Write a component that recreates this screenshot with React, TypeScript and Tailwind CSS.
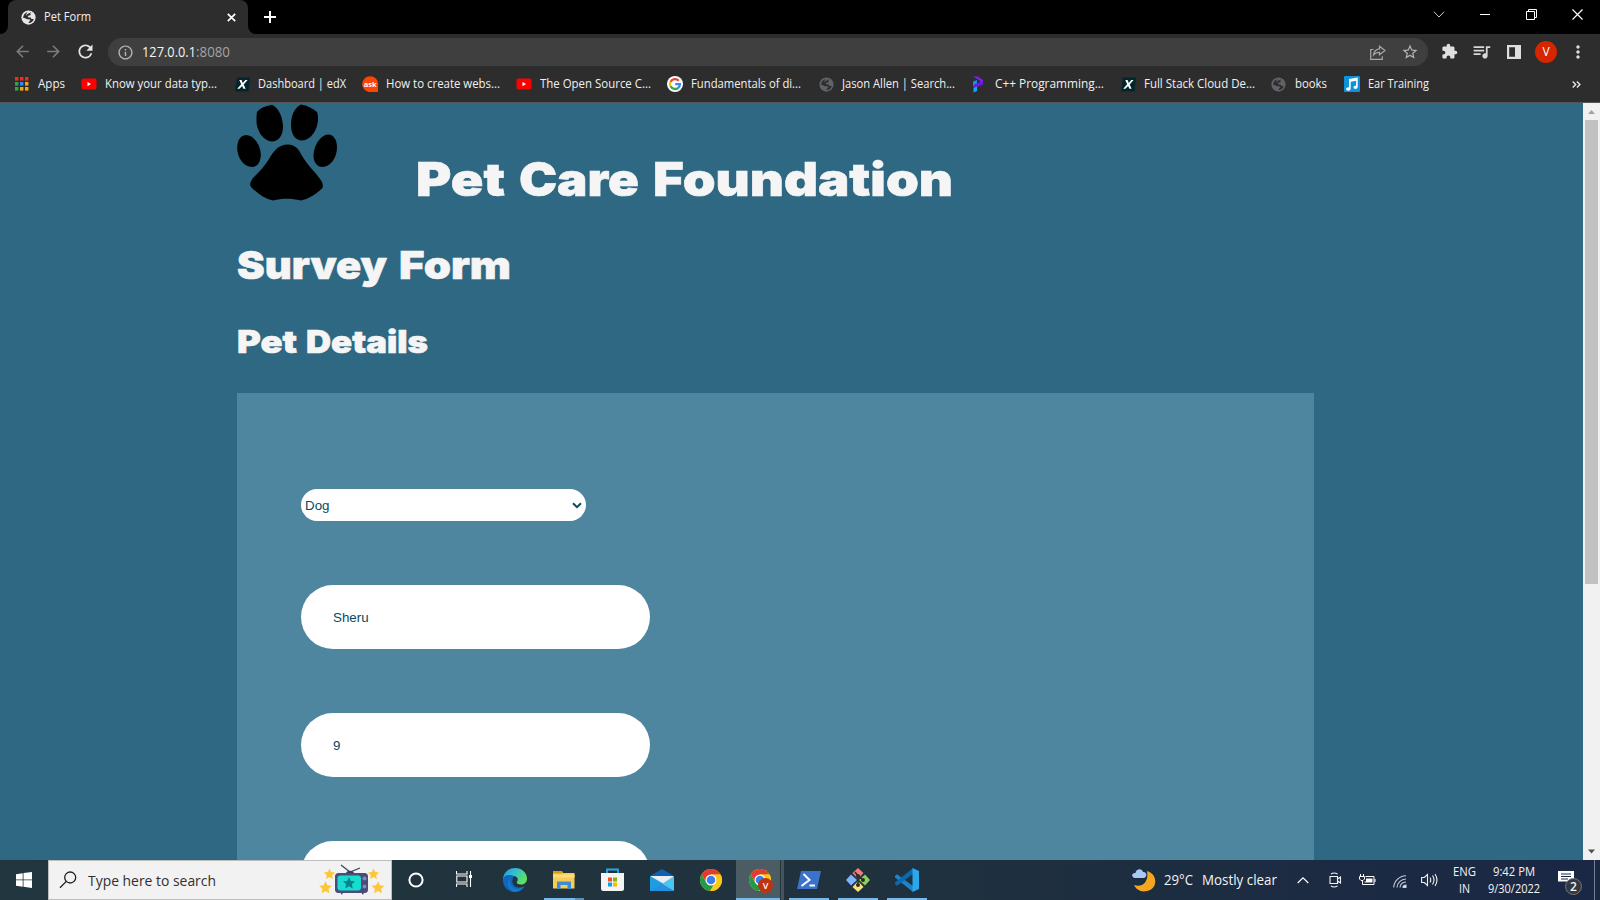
import { useLayoutEffect, useRef, type ReactNode } from 'react';
import {
  MdArrowBack,
  MdArrowForward,
  MdRefresh,
  MdInfoOutline,
  MdStarBorder,
  MdExtension,
  MdQueueMusic,
  MdMoreVert,
} from 'react-icons/md';

/* Text condensed or widened horizontally so that it fills exactly `w` pixels. */
function Fit({ w, children, className = '' }: { w: number; children: string; className?: string }) {
  const ref = useRef<HTMLSpanElement>(null);
  useLayoutEffect(() => {
    const el = ref.current;
    if (!el) return;
    el.style.transform = 'none';
    el.style.transform = `scaleX(${w / el.getBoundingClientRect().width})`;
  }, [w, children]);
  return (
    <span className={`block flex-none ${className}`} style={{ width: w }}>
      <span ref={ref} className="inline-block origin-left whitespace-pre align-top">
        {children}
      </span>
    </span>
  );
}

function Globe({ color, hole, size }: { color: string; hole: string; size: number }) {
  return (
    <svg width={size} height={size} viewBox="0 0 16 16" className="flex-none">
      <circle cx="8" cy="8" r="7.6" fill={color} />
      <path d="M10.800 2.300 9.800 4.200 10.600 5.200 7.600 6.200 7.200 7.700 10.200 8 11.200 9.700 13.600 9.500C13.200 11.800 11.200 13.800 8.200 13.900L8.400 12.400 10 11.300 9 9.800 6.500 9.900 3.800 8.500 2.300 8.600C2.300 5.500 4 3 7 2.300L5.600 4.500 5 6.200 7 4.300z" fill={hole} />
    </svg>
  );
}

function YouTube() {
  return (
    <svg width="16" height="16" viewBox="0 0 16 16">
      <rect x="0.500" y="2.500" width="15" height="11" rx="2" fill="#f00" />
      <path d="M6.500 6v4.200L10 8.100z" fill="#fff" />
    </svg>
  );
}

function Edx() {
  return (
    <svg width="15" height="15" viewBox="0 0 15 15">
      <path d="M2 0.500h13L13.500 14.500H0z" fill="#02262b" />
      <path d="M4.300 3h2.300l1.200 2.900L10.300 3h2.300L8.700 7.400l1.900 4.300H8.400L7.100 8.900l-2.600 2.800H2.200l4-4.400z" fill="#fff" />
    </svg>
  );
}

function Ask() {
  return (
    <svg width="17" height="17" viewBox="0 0 17 17">
      <circle cx="8.200" cy="8.200" r="8" fill="#fc4503" />
      <path d="M10 10h6v6H9z" fill="#fc4503" />
      <text x="8.200" y="10.600" textAnchor="middle" fontSize="7.500" fontWeight="700" fontFamily="Open Sans, sans-serif" fill="#fff">ask</text>
    </svg>
  );
}

function Google() {
  return (
    <svg width="16" height="16" viewBox="0 0 16 16">
      <circle cx="8" cy="8" r="8" fill="#fff" />
      <g fill="none" strokeWidth="2.300">
        <path d="M11.700 4.700A5 5 0 0 0 3.600 5.700" stroke="#ea4335" />
        <path d="M3.600 5.600a5 5 0 0 0 0 4.800" stroke="#fbbc05" />
        <path d="M3.600 10.300a5 5 0 0 0 7.700 1.500" stroke="#34a853" />
        <path d="M8.200 8.200h4.700a5 5 0 0 1-1.700 3.700" stroke="#4285f4" />
      </g>
    </svg>
  );
}

function Ribbon() {
  return (
    <svg width="12" height="17" viewBox="0 0 12 17">
      <path d="M1 .5h4.500L11 4v3L8.500 7.500V5z" fill="#8a1cf5" />
      <path d="M1 5.500 5 4v5l-4 2z" fill="#1a8cf0" />
      <path d="M11 5v3.500L1.500 12.500V9L8 6z" fill="#6a18e6" />
      <path d="M1.500 12 5 10.500V15l-3.500 1.500z" fill="#14a5f5" />
    </svg>
  );
}

function Music() {
  return (
    <svg width="16" height="16" viewBox="0 0 16 16">
      <rect width="16" height="16" rx="1" fill="#0c93dc" />
      <path d="M5 3 13.700 1.500v9.200c0 2.900-4.200 2.900-4.200.6 0-1.300 1.300-1.800 2.600-1.600V4.800L6.700 5.800v6.700c0 2.900-4.600 2.900-4.600.6C2.100 11.700 3.700 11 5 11.300z" fill="#fff" />
    </svg>
  );
}

function AppsGrid() {
  const colors = ['#f22c1f', '#f22c1f', '#f22c1f', '#2aa84f', '#2a8cf2', '#f5a70a', '#2aa84f', '#f5a70a', '#f5a70a'];
  return (
    <svg width="14" height="14" viewBox="0 0 14 14">
      {colors.map((c, i) => (
        <rect key={i} x={(i % 3) * 5} y={Math.floor(i / 3) * 5} width="3.400" height="3.600" fill={c} />
      ))}
    </svg>
  );
}

const bookmarks: { width: string; pad: string; icon: ReactNode; label: string; w: number }[] = [
  { width: 'w-[66px]', pad: 'w-[23px]', icon: <AppsGrid />, label: 'Apps', w: 27 },
  { width: 'w-[154px]', pad: 'w-[24px]', icon: <YouTube />, label: 'Know your data typ...', w: 112 },
  { width: 'w-[127px]', pad: 'w-[23px]', icon: <Edx />, label: 'Dashboard | edX', w: 88 },
  { width: 'w-[154px]', pad: 'w-[24px]', icon: <Ask />, label: 'How to create webs...', w: 114 },
  { width: 'w-[151px]', pad: 'w-[24px]', icon: <YouTube />, label: 'The Open Source C...', w: 111 },
  { width: 'w-[152px]', pad: 'w-[24px]', icon: <Google />, label: 'Fundamentals of di...', w: 110 },
  { width: 'w-[153px]', pad: 'w-[23px]', icon: <Globe size={15} color="#5f6368" hole="#2d2d2d" />, label: 'Jason Allen | Search...', w: 113 },
  { width: 'w-[149px]', pad: 'w-[23px]', icon: <Ribbon />, label: 'C++ Programming...', w: 109 },
  { width: 'w-[150px]', pad: 'w-[23px]', icon: <Edx />, label: 'Full Stack Cloud De...', w: 111 },
  { width: 'w-[73px]', pad: 'w-[24px]', icon: <Globe size={15} color="#5f6368" hole="#2d2d2d" />, label: 'books', w: 32 },
  { width: 'w-[90px]', pad: 'w-[24px]', icon: <Music />, label: 'Ear Training', w: 61 },
];

function TabStrip() {
  return (
    <div className="flex h-[34px] flex-none items-start bg-black">
      <svg width="8" height="34" viewBox="0 0 8 34" className="flex-none">
        <path d="M8 26v8H0a8 8 0 0 0 8-8z" fill="#2d2d2d" />
      </svg>
      <div className="flex h-[34px] w-60 flex-none items-center rounded-t-lg bg-[#2d2d2d] pl-[13px]">
        <Globe size={15} color="#e6e6e6" hole="#2d2d2d" />
        <Fit w={47} className="ml-2 text-xs leading-[34px] text-[#f1f1f1]">Pet Form</Fit>
        <svg width="9" height="9" viewBox="0 0 9 9" className="ml-[136px]">
          <path d="M.8.800 8.200 8.200M8.200.800.800 8.200" stroke="#fff" strokeWidth="1.700" />
        </svg>
      </div>
      <svg width="8" height="34" viewBox="0 0 8 34" className="flex-none">
        <path d="M0 26v8h8a8 8 0 0 1-8-8z" fill="#2d2d2d" />
      </svg>
      <svg width="12" height="12" viewBox="0 0 12 12" className="mt-[11px] ml-2 flex-none">
        <path d="M6 0v12M0 6h12" stroke="#fff" strokeWidth="2" />
      </svg>
      <div className="mr-[17px] ml-auto flex h-[29px] items-center">
        <svg width="12" height="7" viewBox="0 0 12 7"><path d="M1 .8 6 6 11 .8" fill="none" stroke="#ccc" strokeWidth="1" /></svg>
        <svg width="10" height="1" viewBox="0 0 10 1" className="ml-[35px]"><path d="M0 .5h10" stroke="#fff" /></svg>
        <svg width="11" height="11" viewBox="0 0 11 11" className="ml-[36px]">
          <path d="M.5 2.500h8v8h-8zM2.500 2.500v-2h8v8h-2" fill="none" stroke="#fff" />
        </svg>
        <svg width="11" height="11" viewBox="0 0 11 11" className="ml-[35px]"><path d="m.5.500 10 10M10.500.500l-10 10" stroke="#fff" strokeWidth="1.200" /></svg>
      </div>
    </div>
  );
}

function Toolbar() {
  return (
    <div className="flex h-[36px] flex-none items-center bg-[#2d2d2d] pb-px pl-[13px] text-[#7c7c7c]">
      <MdArrowBack size={19} className="flex-none" />
      <MdArrowForward size={19} className="ml-[12px] flex-none" />
      <MdRefresh size={21} className="ml-[12px] flex-none text-[#e4e4e4]" />
      <div className="mt-px ml-[12px] flex h-7 w-[1320px] flex-none items-center rounded-full bg-[#3f3f3f] pl-[9px]">
        <MdInfoOutline size={17} className="flex-none text-[#b0b3b7]" />
        <Fit w={54} className="ml-2 text-sm leading-7 text-[#f4f4f4]">127.0.0.1</Fit>
        <Fit w={34} className="text-sm leading-7 text-[#a3a3a3]">:8080</Fit>
        <svg width="16" height="15" viewBox="0 0 16 15" className="ml-auto flex-none">
          <path d="M3.500 4.500H.700v9.800h11.600v-3M9.500 1.200l5.500 4.300-5.500 4.300V7.300C6.500 7.300 4.800 8.300 3.500 10c.3-3 2.300-5.800 6-6.200z" fill="none" stroke="#a8a8a8" strokeWidth="1.200" />
        </svg>
        <MdStarBorder size={18} className="mr-[9px] ml-[15px] flex-none text-[#b5b5b5]" />
      </div>
      <MdExtension size={17} className="ml-[13px] flex-none text-[#e0e0e0]" />
      <MdQueueMusic size={21} className="ml-[13px] flex-none text-[#d8d8d8]" />
      <svg width="14" height="14" viewBox="0 0 14 14" className="mt-px ml-[15px] flex-none">
        <path d="M0 0h14v14H0zM2.200 2.200v9.600H8V2.200z" fill="#dedede" fillRule="evenodd" />
      </svg>
      <div className="mt-px ml-[14px] flex h-[22px] w-[22px] flex-none items-center justify-center rounded-full bg-[#d52600] text-xs text-white">V</div>
      <MdMoreVert size={20} className="mt-px ml-[11px] flex-none text-[#e0e0e0]" />
    </div>
  );
}

function BookmarkBar() {
  return (
    <div className="flex h-[33px] flex-none items-center border-b border-[#555] bg-[#2d2d2d] pb-[4px] pl-[15px] text-xs leading-5 text-[#f1f1f1]">
      {bookmarks.map((b, i) => (
        <div key={i} className={`flex flex-none items-center ${b.width}`}>
          <div className={`flex flex-none ${b.pad}`}>{b.icon}</div>
          <Fit w={b.w}>{b.label}</Fit>
        </div>
      ))}
      <svg width="9" height="7" viewBox="0 0 9 7" className="mr-[19px] ml-auto">
        <path d="m.7.500 3 3-3 3M4.900.500l3 3-3 3" fill="none" stroke="#e8e8e8" strokeWidth="1.400" />
      </svg>
    </div>
  );
}

function Paw() {
  return (
    <svg width="100" height="97" viewBox="0 0 100 97" className="flex-none">
      <path d="M20 8C24 3 30 2 35 .800 42 4 46 14 46 23c0 9-5 14.500-11 14.500C26 37 19.500 26 19.500 17c0-4 0-6 .5-9z" />
      <path d="M80 8C75 4 70 1.500 64 .500 57 4 54 12 54 21c0 9 4 15.500 11 15.500C74 36 80.500 26 81 16c0-3 0-5-1-8z" />
      <path d="M9 31c7 0 14.500 9 14.800 19.500C24 58 20 63 15 63 7 63 .300 54 .200 44 .2 37 3 31.500 9 31z" />
      <path d="M91 30.500c6 0 9 6 9 13C100 54 93 63 85.500 63 80 63 76.500 58 76.500 52 76.500 41 84 31 91 30.500z" />
      <path d="M51 40.500c6 0 10 3.500 13 9.500 7 13 16 19 21 28 1 3 1 4 .500 6C78 91 71 95 64 96.500 54 94 45 94 36 96.500 28 95 21 90 14 83c-2-3 0-6 2-9C23 67 27 63 32 55c5-8 9-14.500 19-14.500z" />
    </svg>
  );
}

function Page() {
  return (
    <div className="flex min-h-0 flex-1 bg-[#2e6882]">
      <main className="flex min-w-0 flex-1 flex-col overflow-hidden pl-[237px] font-['Inter',sans-serif] font-black text-[#f5f5f5] [-webkit-text-stroke:0.6px_#f5f5f5]">
        <header className="flex h-[111px] flex-none pt-px">
          <Paw />
          <h1 className="mt-[46px] ml-[79px] flex gap-[14px] text-[46.5px] leading-[58px]">
            <Fit w={89}>Pet</Fit> <Fit w={120}>Care</Fit> <Fit w={300}>Foundation</Fit>
          </h1>
        </header>
        <h2 className="mt-[26px] flex h-[50px] flex-none gap-[12px] text-[38.5px] leading-[50px]">
          <Fit w={150}>Survey</Fit> <Fit w={112}>Form</Fit>
        </h2>
        <h3 className="mt-[32px] flex h-10 flex-none gap-[9px] text-[31px] leading-10">
          <Fit w={60}>Pet</Fit> <Fit w={122}>Details</Fit>
        </h3>
        <form className="mt-[31px] flex h-[600px] w-[1077px] flex-none flex-col gap-16 bg-[#4e86a0] px-16 pt-24 font-['Liberation_Sans',Arial,sans-serif] text-[13.333px] font-normal text-[#064a63] [-webkit-text-stroke:0]">
          <div className="grid w-[285px] flex-none items-center">
            <select className="col-start-1 row-start-1 h-8 w-full appearance-none rounded-full bg-white pt-px pl-[4px] outline-none">
              <option>Dog</option>
            </select>
            <svg width="10" height="7" viewBox="0 0 10 7" className="pointer-events-none col-start-1 row-start-1 mr-[4px] justify-self-end">
              <path d="m1 1.200 4 4 4-4" fill="none" stroke="#064a63" strokeWidth="2" />
            </svg>
          </div>
          <input className="h-16 w-[349px] flex-none rounded-full bg-white px-[32px] outline-none" defaultValue="Sheru" />
          <input className="h-16 w-[349px] flex-none rounded-full bg-white px-[32px] outline-none" defaultValue="9" />
          <input className="h-16 w-[349px] flex-none rounded-full bg-white px-[32px] outline-none" defaultValue="" />
        </form>
      </main>
      <div className="flex w-[17px] flex-none flex-col items-center bg-[#f1f1f1]">
        <svg width="17" height="17" viewBox="0 0 17 17"><path d="M5 11h7L8.500 7z" fill="#a3a3a3" /></svg>
        <div className="h-[464px] w-[13px] bg-[#c1c1c1]" />
        <svg width="17" height="17" viewBox="0 0 17 17" className="mt-auto"><path d="M5 6.500h7l-3.500 4z" fill="#505050" /></svg>
      </div>
    </div>
  );
}

function Chrome() {
  return (
    <svg width="24" height="24" viewBox="0 0 24 24">
      <circle cx="12" cy="12" r="11" fill="#fbc816" />
      <path d="M2.500 6.500A11 11 0 0 1 21.500 6.500H12L8 15z" fill="#e33b2e" />
      <path d="M2.500 6.500A11 11 0 0 0 11 23l4.800-8.300L12 17l-4.500-2.200z" fill="#229a48" />
      <path d="M12 6.500h9.500A11 11 0 0 1 11 23l5.500-8.300z" fill="#fbc816" />
      <circle cx="12" cy="12" r="5.500" fill="#fff" />
      <circle cx="12" cy="12" r="4.300" fill="#3b7ded" />
    </svg>
  );
}

function Television() {
  const star = 'M0-5.500 1.600-1.900 5.500-1.500 2.600 1.200 3.400 5 0 3-3.400 5-2.600 1.200-5.500-1.500-1.600-1.900z';
  return (
    <svg width="66" height="32" viewBox="0 0 66 32">
      <g fill="#fdc53a">
        <path d={star} transform="translate(10.500 10)" />
        <path d={star} transform="translate(6.500 23.500) scale(1.150)" />
        <path d={star} transform="translate(54.500 10)" />
        <path d={star} transform="translate(59 23.500) scale(1.150)" />
      </g>
      <path d="m22 1 9 7 10-4" fill="none" stroke="#3b3f66" strokeWidth="1.200" />
      <path d="M27 9c1-3 7-3 8 0z" fill="#3a3b5d" />
      <path d="M21 28h3l-1 3zM42 28h3l-1 3z" fill="#333657" />
      <rect x="16" y="9" width="33" height="20" rx="3.500" fill="#4a4d78" />
      <rect x="18.500" y="11.500" width="23.500" height="15" rx="3" fill="#18dcd0" />
      <path d={star} transform="translate(30 19) scale(1.100)" fill="#08838a" />
      <circle cx="45.500" cy="14.500" r="2" fill="#8587b8" />
      <circle cx="45.500" cy="22.500" r="2" fill="#8587b8" />
    </svg>
  );
}

function TaskItem({ className, bar = false, children }: { className: string; bar?: boolean; children: ReactNode }) {
  return (
    <div className={`flex h-10 flex-none flex-col items-center ${className}`}>
      <div className="flex h-[38px] items-center pt-[2px]">{children}</div>
      {bar && <div className="h-[2px] w-full bg-[#76b9ed]" />}
    </div>
  );
}

function Taskbar() {
  return (
    <div className="flex h-10 flex-none bg-linear-to-r from-[#21363f] via-[#20323d] to-[#1a2745] text-[#f3f3f3]">
      <div className="flex w-12 flex-none items-center justify-center">
        <svg width="16" height="16" viewBox="0 0 16 16" fill="#fff">
          <path d="M0 2.200 6.700 1.200v6.300H0zM7.500 1.100 16 0v7.500H7.500zM0 8.300h6.700v6.400L0 13.700zM7.500 8.300H16V16l-8.500-1.200z" />
        </svg>
      </div>
      <div className="flex w-[344px] flex-none items-center border border-[#bdbdbd] bg-[#f2f2f2] pl-[10px] text-[#303030]">
        <svg width="18" height="18" viewBox="0 0 18 18">
          <circle cx="11.200" cy="6.500" r="5.500" fill="none" stroke="#202020" strokeWidth="1.300" />
          <path d="M7.300 10.400 1 16.700" stroke="#202020" strokeWidth="1.300" />
        </svg>
        <Fit w={128} className="ml-[11px] text-[15px] leading-[38px]">Type here to search</Fit>
        <div className="mr-[6px] ml-auto"><Television /></div>
      </div>
      <TaskItem className="w-12">
        <svg width="16" height="16" viewBox="0 0 16 16"><circle cx="8" cy="8" r="6.600" fill="none" stroke="#fff" strokeWidth="2" /></svg>
      </TaskItem>
      <TaskItem className="w-12">
        <svg width="16" height="16" viewBox="0 0 16 16" className="mt-px mb-[4px]" fill="none" stroke="#fff" strokeWidth="1.100">
          <path d="M.5 0v3h10.500V0M.500 16v-3h10.500v3M.800 5h10.200v6H.800zM14.500 0v16" />
          <path d="M13 4h3v3h-3z" fill="#fff" stroke="none" />
        </svg>
      </TaskItem>
      <TaskItem className="w-[54px]">
        <svg width="24" height="24" viewBox="0 0 24 24">
          <defs>
            <linearGradient id="edgeTop" x1="0" x2="1" y1="0" y2=".5">
              <stop offset="0" stopColor="#2496dc" />
              <stop offset=".5" stopColor="#32bfd2" />
              <stop offset="1" stopColor="#62e05c" />
            </linearGradient>
          </defs>
          <path d="M0 12C0 5 5 0 12 0c7 0 12 5 12 10.500 0 4-3 6-6 6-3 0-5-1.200-4-2.800 2-3 0-5.700-4-5.700C5 8 1 11 0 14z" fill="url(#edgeTop)" />
          <path d="M0 12c0-4 5-6 9.500-4.500C12 8.500 8.500 11 9.500 15c1 4 6 6 12 3.300C20 21.500 16.500 24 12 24 5 24 0 19 0 12z" fill="#0e67bd" />
          <path d="M9 8.500C5 11 6 19 13 20.500c3.500.700 6.500-.500 8.500-2.200C19 22 15 24 12 24 5 23 2 13 9 8.500z" fill="#1679cc" />
        </svg>
      </TaskItem>
      <div className="ml-[2px] flex w-10 flex-none flex-col items-center">
        <div className="flex h-[38px] items-center pt-px">
          <svg width="22" height="18" viewBox="0 0 22 18">
            <path d="M0 0h9l1 2h11.500v15.500H0z" fill="#f7cb55" />
            <path d="M0 0h9l.5 2.500H0z" fill="#dd9b10" />
            <path d="M0 3.500h21.500v3H0z" fill="#ffdc7b" />
            <path d="M4 18v-7.500h14V18h-3.500v-4h-7v4z" fill="#3c8ed3" />
          </svg>
        </div>
        <div className="flex w-full"><div className="h-[2px] w-[31px] bg-[#76b9ed]" /><div className="h-[2px] flex-1 bg-[#5d8fbb]" /></div>
      </div>
      <TaskItem className="ml-[3px] w-[49px]">
        <svg width="24" height="24" viewBox="0 0 24 24" className="ml-[3px]">
          <path d="M6 6V1.500h11V6" fill="none" stroke="#24a9ee" strokeWidth="1.800" />
          <path d="M0 5h23v15.500q0 2.500-2.500 2.500h-18Q0 23 0 20.500z" fill="#f4f4f4" />
          <path d="M7 9.500h4v4H7z" fill="#f05022" /><path d="M12 9.500h4v4h-4z" fill="#7eb900" />
          <path d="M7 14.500h4v4H7z" fill="#02a3ee" /><path d="M12 14.500h4v4h-4z" fill="#fdb800" />
        </svg>
      </TaskItem>
      <TaskItem className="ml-px w-[49px]">
        <svg width="24" height="22" viewBox="0 0 24 22">
          <path d="m0 7 12-7 12 7-2 4H2z" fill="#0b61b2" />
          <path d="M1 7h22v8H1z" fill="#eee" />
          <path d="M0 7v15h24L14 15z" fill="#1e9de4" />
          <path d="M24 7v15L12 15z" fill="#4cc5f3" />
          <path d="M0 22 12 15l12 7z" fill="#2690df" />
        </svg>
      </TaskItem>
      <TaskItem className="w-[50px]"><Chrome /></TaskItem>
      <TaskItem className="w-[44px] bg-[#4c5c64]" bar>
        <div className="relative ml-1">
          <Chrome />
          <div className="absolute top-[10px] left-[10px] flex h-[15px] w-[15px] items-center justify-center rounded-full bg-[#bd3510] text-[9px] font-semibold text-white">V</div>
        </div>
      </TaskItem>
      <div className="flex w-1 flex-none flex-col border-l border-[#26343c] bg-[#46555d]" />
      <TaskItem className="ml-[5px] w-10" bar>
        <svg width="24" height="18" viewBox="0 0 24 18">
          <path d="M4 0h20l-4 18H0z" fill="#3b73cc" />
          <path d="m6.500 3 6 6-8 6M12.500 14.500h5.500" fill="none" stroke="#fff" strokeWidth="2" />
        </svg>
      </TaskItem>
      <TaskItem className="ml-[9px] w-10" bar>
        <svg width="24" height="24" viewBox="0 0 24 24">
          <path d="m12 0 5.500 5-5.500 6-5.500-6z" fill="#f37c79" />
          <path d="m19 6.500 5 5.500-5 5.500-6-5.500z" fill="#87d457" />
          <path d="m12 13 5.500 6L12 24l-5.500-5z" fill="#fbe078" />
          <path d="m5 6.500 6 5.500-6 5.500L0 12z" fill="#80b3ff" />
          <path d="m9 4 3 4v9M12 8l5 4" fill="none" stroke="#2e2c2b" strokeWidth="1.600" />
          <circle cx="12" cy="8" r="2" fill="#2e2c2b" /><circle cx="17" cy="12" r="2" fill="#2e2c2b" /><circle cx="12" cy="17" r="2" fill="#2e2c2b" />
        </svg>
      </TaskItem>
      <TaskItem className="ml-[9px] w-10" bar>
        <svg width="24" height="24" viewBox="0 0 24 24">
          <path d="m0 8 2-1.800L18 18v6L0 9.500z" fill="#1b84cb" />
          <path d="m0 16 2 1.800L18 6V0L0 14.500z" fill="#0c69b0" />
          <path d="M17.500 0 24 3v18l-6.500 3z" fill="#2ba7ee" />
        </svg>
      </TaskItem>
      <div className="ml-auto flex flex-none items-center pr-[5px] text-sm">
        <svg width="24" height="23" viewBox="0 0 24 23">
          <path d="M15 2c11 3 11 18 0 20-6 1.500-11-1.500-13-6 9 3 15-4 13-14z" fill="#f6a51e" />
          <path d="M2.500 9C-1 8-.500 3.500 3.500 4 4-.500 10-1 11 3c4-.500 4.500 5 1 6z" fill="#a9c9f5" />
        </svg>
        <Fit w={29} className="ml-[8px] text-[15px]">29°C</Fit>
        <Fit w={75} className="ml-[9px] text-[15px]">Mostly clear</Fit>
        <svg width="12" height="7" viewBox="0 0 12 7" className="ml-5"><path d="M.700 6 6 .900 11.300 6" fill="none" stroke="#fff" strokeWidth="1.200" /></svg>
        <svg width="13" height="16" viewBox="0 0 13 16" className="ml-5" fill="none" stroke="#f1f1f1" strokeWidth="1.100">
          <path d="M1 4.500h7.500v7H1zM8.500 7 11.500 5v6l-3-2M2 2q3-2 6.500 0M2 14q3 2 6.500 0" />
        </svg>
        <svg width="17" height="12" viewBox="0 0 17 12" className="ml-[17px]" fill="none" stroke="#fff">
          <path d="M6.500 2.500H15v8H3.500V7M1.500 0v2.500M4.500 0v2.500M.500 2.500h5V5L4 6.500H2L.500 5z" />
          <path d="M7 4.500h6.500v4H5.500V7.500h1.500z" fill="#fff" stroke="none" /><path d="M16 5v3" />
        </svg>
        <svg width="14" height="13" viewBox="0 0 14 13" className="mt-[2px] ml-[17px]" fill="none" stroke="#c5cbd5" strokeWidth="1.100">
          <path d="M.7 12.500C1 6 6 1 13 .700M4 12.500C4.200 8 8 4.200 13 4M7 12.500c.2-3 2.500-5.300 6-5.500" />
          <path d="M10 12.500c0-1.500 1.200-2.500 3-2.500v2.500z" fill="#fff" />
        </svg>
        <svg width="18" height="14" viewBox="0 0 18 14" className="ml-[14px]" fill="none" stroke="#f1f1f1" strokeWidth="1.100">
          <path d="M.6 4.500h2.700L6.500 1.500v11L3.300 9.500H.6zM9 4.500q1.500 2.500 0 5M11.500 2.500q3 4.500 0 9M14 1q4 6 0 12" />
        </svg>
        <div className="ml-[13px] flex w-6 flex-col items-center text-xs leading-[17px]">
          <Fit w={23}>ENG</Fit>
          <Fit w={11}>IN</Fit>
        </div>
        <div className="ml-[12px] flex flex-col items-center text-xs leading-[17px]">
          <Fit w={42}>9:42 PM</Fit>
          <Fit w={52}>9/30/2022</Fit>
        </div>
        <div className="relative ml-[18px] h-6 w-6">
          <svg width="17" height="17" viewBox="0 0 17 17">
            <path d="M0 3h16v14l-4-3.500H0z" fill="#fff" />
            <path d="M3 6h10M3 8.500h10M3 11h7" stroke="#1c2942" />
          </svg>
          <div className="absolute top-[10px] left-[7px] flex h-[17px] w-[17px] items-center justify-center rounded-full border border-[#777] bg-[#333942] text-[12px] font-semibold">2</div>
        </div>
        <div className="ml-[12px] h-10 w-px bg-[#77808f]" />
      </div>
    </div>
  );
}

export default function App() {
  return (
    <div className="flex h-[900px] w-[1600px] flex-col overflow-hidden font-['Open_Sans','Noto_Sans',sans-serif]">
      <TabStrip />
      <Toolbar />
      <BookmarkBar />
      <Page />
      <Taskbar />
    </div>
  );
}
